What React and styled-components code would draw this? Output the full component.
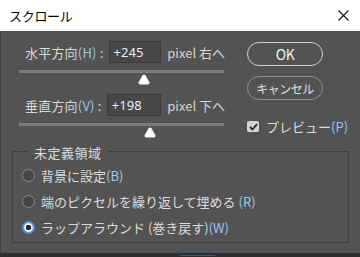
import styled, { createGlobalStyle } from "styled-components";

const Global = createGlobalStyle`
  html, body {
    margin: 0;
    padding: 0;
    background: #2e2e2e;
  }
  body {
    font-family: "Noto Sans CJK JP", "Noto Sans", sans-serif;
  }
`;

const sliders = [
  { label: "水平方向", key: "(H)", value: "+245", unit: "右へ", pos: 125 },
  { label: "垂直方向", key: "(V)", value: "+198", unit: "下へ", pos: 131 },
];

const options = [
  { label: "背景に設定", key: "(B)", checked: false },
  { label: "端のピクセルを繰り返して埋める ", key: "(R)", checked: false },
  { label: "ラップアラウンド (巻き戻す)", key: "(W)", checked: true },
];

export default function App() {
  return (
    <>
      <Global />
      <Window>
        <TitleBar>
          <Title>スクロール</Title>
          <Close>
            <svg width="11" height="11" viewBox="0 0 11 11">
              <path d="M0.5 0.5 L10.5 10.5 M10.5 0.5 L0.5 10.5" stroke="#111" strokeWidth="1.1" />
            </svg>
          </Close>
        </TitleBar>
        <Body>
          <Top>
            <Sliders>
              {sliders.map((s) => (
                <SliderBlock key={s.key}>
                  <Row>
                    <Label>
                      {s.label}
                      <Key>{s.key}</Key> :
                    </Label>
                    <Input>{s.value}</Input>
                    <Unit>pixel {s.unit}</Unit>
                  </Row>
                  <Track />
                  <ThumbLane>
                    <Thumb style={{ marginLeft: s.pos - 6 }}>
                      <svg width="12" height="11" viewBox="0 0 12 11">
                        <path
                          d="M4.6 1.2 Q6 -0.4 7.4 1.2 L11.3 8 Q12 10.5 9.5 10.5 L2.5 10.5 Q0 10.5 0.7 8 Z"
                          fill="#fafafa"
                        />
                      </svg>
                    </Thumb>
                  </ThumbLane>
                </SliderBlock>
              ))}
            </Sliders>
            <Buttons>
              <Button $primary>OK</Button>
              <Button>キャンセル</Button>
              <Check>
                <Box>
                  <svg width="9" height="8" viewBox="0 0 9 8">
                    <path d="M1 4 L3.5 6.5 L8 1.2" stroke="#2a2a2a" strokeWidth="1.8" fill="none" />
                  </svg>
                </Box>
                プレビュー<Key>(P)</Key>
              </Check>
            </Buttons>
          </Top>
          <Group>
            <Legend>未定義領域</Legend>
            {options.map((o) => (
              <Option key={o.key}>
                <Radio $checked={o.checked} />
                <span>
                  {o.label}
                  <Key>{o.key}</Key>
                </span>
              </Option>
            ))}
          </Group>
        </Body>
        <Footer>
          <FooterBlue />
        </Footer>
      </Window>
    </>
  );
}

const Window = styled.div`
  width: 360px;
  height: 257px;
  display: flex;
  flex-direction: column;
  overflow: hidden;
`;

const TitleBar = styled.div`
  height: 31px;
  background: #ffffff;
  display: flex;
  align-items: center;
  justify-content: space-between;
  padding: 0 11px 0 9px;
  box-sizing: border-box;
`;

const Title = styled.div`
  font-size: 13px;
  color: #000;
  letter-spacing: -0.3px;
`;

const Close = styled.div`
  display: flex;
  width: 11px;
  height: 11px;
`;

const Body = styled.div`
  height: 222px;
  background: #535353;
  border-left: 1px solid #3e3e3e;
  box-sizing: border-box;
  padding: 10px 11px 0 11px;
  display: flex;
  flex-direction: column;
`;

const Top = styled.div`
  display: flex;
  align-items: flex-start;
  height: 97px;
`;

const Sliders = styled.div`
  width: 206px;
  margin-left: 7px;
  display: flex;
  flex-direction: column;
  gap: 9px;
`;

const SliderBlock = styled.div`
  display: flex;
  flex-direction: column;
`;

const Row = styled.div`
  display: flex;
  align-items: center;
  height: 22px;
  font-size: 13px;
  color: #d9d9d9;
`;

const Label = styled.div`
  width: 84px;
  padding-left: 6px;
  margin-right: 5px;
  white-space: nowrap;
  letter-spacing: 0.2px;
`;

const Key = styled.span`
  color: #9cc4ec;
`;

const Input = styled.div`
  width: 59px;
  height: 22px;
  box-sizing: border-box;
  background: #474747;
  border: 1px solid #3a3a3a;
  color: #e6eef8;
  font-family: "Noto Sans", sans-serif;
  font-size: 13px;
  line-height: 20px;
  padding-left: 4px;
`;

const Unit = styled.div`
  margin-left: 6px;
  white-space: nowrap;
  color: #d4d4d4;
`;

const Track = styled.div`
  margin-top: 7px;
  height: 3px;
  width: 205px;
  background: #7b7b7b;
`;

const ThumbLane = styled.div`
  height: 11px;
  margin-top: 1px;
  display: flex;
`;

const Thumb = styled.div`
  width: 12px;
  height: 11px;
  display: flex;
`;

const Buttons = styled.div`
  margin-left: 22px;
  padding-top: 1px;
  display: flex;
  flex-direction: column;
  gap: 10px;
`;

const Button = styled.div`
  width: 76px;
  height: 24px;
  box-sizing: border-box;
  border-radius: 12px;
  border: ${(p) => (p.$primary ? "1.5px solid #cfcfcf" : "1.5px solid #8e8e8e")};
  color: ${(p) => (p.$primary ? "#f2f2f2" : "#e0e0e0")};
  font-size: ${(p) => (p.$primary ? "14px" : "12px")};
  display: flex;
  align-items: center;
  justify-content: center;
  letter-spacing: -0.5px;
`;

const Check = styled.div`
  margin-top: 11px;
  height: 11px;
  display: flex;
  align-items: center;
  font-size: 13px;
  color: #dcdcdc;
  white-space: nowrap;
`;

const Box = styled.div`
  width: 12px;
  height: 11px;
  border-radius: 2px;
  background: #d4d4d4;
  display: flex;
  align-items: center;
  justify-content: center;
  margin-right: 7px;
`;

const Group = styled.div`
  position: relative;
  margin-top: 13px;
  height: 92px;
  box-sizing: border-box;
  border: 1px solid #3f3f3f;
  padding: 13px 0 0 9px;
  display: flex;
  flex-direction: column;
  gap: 6px;
`;

const Legend = styled.div`
  position: absolute;
  top: -9px;
  left: 15px;
  padding: 0 6px;
  background: #535353;
  font-size: 13px;
  color: #dcdcdc;
  letter-spacing: 0.5px;
`;

const Option = styled.div`
  display: flex;
  align-items: center;
  height: 20px;
  font-size: 13px;
  color: #dcdcdc;
  white-space: nowrap;
`;

const Radio = styled.div`
  width: 13px;
  height: 13px;
  box-sizing: border-box;
  border-radius: 50%;
  margin-right: 6px;
  border: ${(p) => (p.$checked ? "2px solid #4c93dc" : "1px solid #8a8a8a")};
  background: ${(p) =>
    p.$checked ? "radial-gradient(circle, #2a2a2a 0 2.5px, #f4f4f4 3px)" : "#464646"};
`;

const Footer = styled.div`
  height: 4px;
  background: #2e2e2e;
  display: flex;
  align-items: flex-start;
  padding-top: 2px;
  box-sizing: border-box;
`;

const FooterBlue = styled.div`
  margin-left: 180px;
  width: 35px;
  height: 1px;
  background: #3c5a80;
`;
